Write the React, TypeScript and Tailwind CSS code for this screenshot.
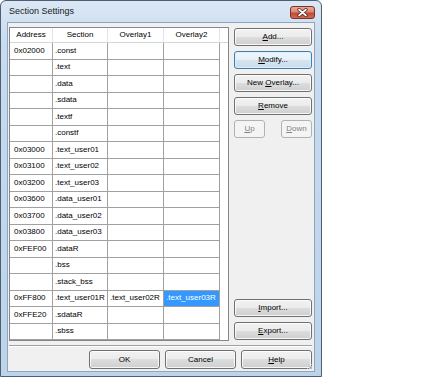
const ROWS = [
  { a: '0x02000', s: '.const', o1: '', o2: '' },
  { a: '', s: '.text', o1: '', o2: '' },
  { a: '', s: '.data', o1: '', o2: '' },
  { a: '', s: '.sdata', o1: '', o2: '' },
  { a: '', s: '.textf', o1: '', o2: '' },
  { a: '', s: '.constf', o1: '', o2: '' },
  { a: '0x03000', s: '.text_user01', o1: '', o2: '' },
  { a: '0x03100', s: '.text_user02', o1: '', o2: '' },
  { a: '0x03200', s: '.text_user03', o1: '', o2: '' },
  { a: '0x03600', s: '.data_user01', o1: '', o2: '' },
  { a: '0x03700', s: '.data_user02', o1: '', o2: '' },
  { a: '0x03800', s: '.data_user03', o1: '', o2: '' },
  { a: '0xFEF00', s: '.dataR', o1: '', o2: '' },
  { a: '', s: '.bss', o1: '', o2: '' },
  { a: '', s: '.stack_bss', o1: '', o2: '' },
  { a: '0xFF800', s: '.text_user01R', o1: '.text_user02R', o2: '.text_user03R' },
  { a: '0xFFE20', s: '.sdataR', o1: '', o2: '' },
  { a: '', s: '.sbss', o1: '', o2: '' },
];

const btnBase =
  'flex items-center justify-center rounded-[3px] border text-[8px] leading-none whitespace-pre';
const btnNormal =
  'border-[#707070] text-black bg-[linear-gradient(#f2f2f2,#ebebeb_50%,#dddddd_50%,#cfcfcf)] shadow-[inset_0_0_0_1px_rgba(255,255,255,0.8)]';
const btnFocus =
  'border-[#3c7fb1] text-black bg-[linear-gradient(#eef6fb,#e6f0f8_50%,#d6e4ef_50%,#cbdbe8)] shadow-[inset_0_0_0_1px_rgba(220,240,255,0.9)]';
const btnDisabled = 'border-[#adb2b5] text-[#838383] bg-[#f4f4f4]';

function Btn({ children, kind = 'normal', className = '' }: { children: React.ReactNode; kind?: 'normal' | 'focus' | 'disabled'; className?: string }) {
  const k = kind === 'focus' ? btnFocus : kind === 'disabled' ? btnDisabled : btnNormal;
  return (
    <div className={`${btnBase} ${k} ${className}`}>
      <span>{children}</span>
    </div>
  );
}

function U({ children }: { children: React.ReactNode }) {
  return <span className="underline underline-offset-1 decoration-[0.5px]">{children}</span>;
}

export default function App() {
  return (
    <div className="w-[434px] h-[380px] bg-white font-['Liberation_Sans',Arial,sans-serif]">
      <div className="w-[322px] h-[377px] flex flex-col rounded-t-[6px] border border-[#4f5f72] bg-[linear-gradient(#dbe7f4,#c8dbef_12%,#bcd3ea)]">
        {/* title bar */}
        <div className="h-[21px] flex items-center pl-[8px] pr-[6px]">
          <span className="text-[9px] text-[#1a1a1a]">Section Settings</span>
          <div className="ml-auto mt-[2px] w-[25px] h-[13px] rounded-[3px] border border-[#7b3326] bg-[linear-gradient(#e8a897,#d98774_48%,#c4472f_52%,#cf6a55)] flex items-center justify-center">
            <svg width="11" height="9" viewBox="0 0 11 9">
              <path d="M2 1.5 L9 7.5 M9 1.5 L2 7.5" stroke="#4a1a12" strokeWidth="3.2" strokeLinecap="round" />
              <path d="M2 1.5 L9 7.5 M9 1.5 L2 7.5" stroke="#ffffff" strokeWidth="1.7" strokeLinecap="round" />
            </svg>
          </div>
        </div>

        {/* client */}
        <div className="flex-1 mx-[6px] mb-[4px] border border-[#8ea5c0] bg-[#f0f0f0] flex flex-col pl-[1px] pr-[2px] pt-[4px] relative">
          <div className="flex justify-between h-[314px]">
            {/* table */}
            <div className="w-[220px] h-[314px] border border-[#828790] bg-white flex flex-col overflow-hidden">
              <div className="h-[15px] flex border-b border-[#d5d5d5] text-[8px] text-black">
                <div className="w-[43px] flex items-center justify-center border-r border-[#e5e5e5]">Address</div>
                <div className="w-[55px] flex items-center justify-center border-r border-[#e5e5e5]">Section</div>
                <div className="w-[56px] flex items-center justify-center border-r border-[#e5e5e5]">Overlay1</div>
                <div className="w-[56px] flex items-center justify-center border-r border-[#e5e5e5]">Overlay2</div>
              </div>
              {ROWS.map((r, i) => (
                <div key={i} className="h-[16.5px] flex text-[8px] text-black">
                  <div className="w-[43px] flex items-center pl-[4px] border-r border-b border-[#a0a0a0] whitespace-nowrap">{r.a}</div>
                  <div className="w-[55px] flex items-center pl-[2px] border-r border-b border-[#a0a0a0] whitespace-nowrap overflow-hidden">{r.s}</div>
                  <div className="w-[56px] flex items-center pl-[2px] border-r border-b border-[#a0a0a0] whitespace-nowrap overflow-hidden">{r.o1}</div>
                  <div className={`w-[56px] flex items-center pl-[2px] border-r border-b border-[#a0a0a0] whitespace-nowrap overflow-hidden ${r.o2 ? 'bg-[#3399ff] text-white' : ''}`}>{r.o2}</div>
                </div>
              ))}
            </div>

            {/* side buttons */}
            <div className="w-[78px] flex flex-col gap-[5px] pt-[1px]">
              <Btn className="h-[18px]"><U>A</U>dd...</Btn>
              <Btn kind="focus" className="h-[18px]"><U>M</U>odify...</Btn>
              <Btn className="h-[18px]">New <U>O</U>verlay...</Btn>
              <Btn className="h-[18px]"><U>R</U>emove</Btn>
              <div className="flex justify-between">
                <Btn kind="disabled" className="h-[18px] w-[31px]"><U>U</U>p</Btn>
                <Btn kind="disabled" className="h-[18px] w-[31px]"><U>D</U>own</Btn>
              </div>
              <Btn className="h-[18px] mt-auto"><U>I</U>mport...</Btn>
              <Btn className="h-[18px] mb-[1px]"><U>E</U>xport...</Btn>
            </div>
          </div>

          {/* separator */}
          <div className="mt-[4px] border-t border-b border-t-[#a0a0a0] border-b-white" />

          {/* bottom buttons */}
          <div className="mt-[3px] flex justify-end gap-[5px]">
            <Btn className="w-[71px] h-[19px]">OK</Btn>
            <Btn className="w-[71px] h-[19px]">Cancel</Btn>
            <Btn className="w-[71px] h-[19px]"><U>H</U>elp</Btn>
          </div>

          {/* size grip */}
          <svg className="absolute right-[1px] bottom-[1px]" width="7" height="7" viewBox="0 0 7 7">
            <rect x="5" y="1" width="1" height="1" fill="#b8b8b8" />
            <rect x="3" y="3" width="1" height="1" fill="#b8b8b8" />
            <rect x="5" y="3" width="1" height="1" fill="#b8b8b8" />
            <rect x="1" y="5" width="1" height="1" fill="#b8b8b8" />
            <rect x="3" y="5" width="1" height="1" fill="#b8b8b8" />
            <rect x="5" y="5" width="1" height="1" fill="#b8b8b8" />
          </svg>
        </div>
      </div>
    </div>
  );
}
